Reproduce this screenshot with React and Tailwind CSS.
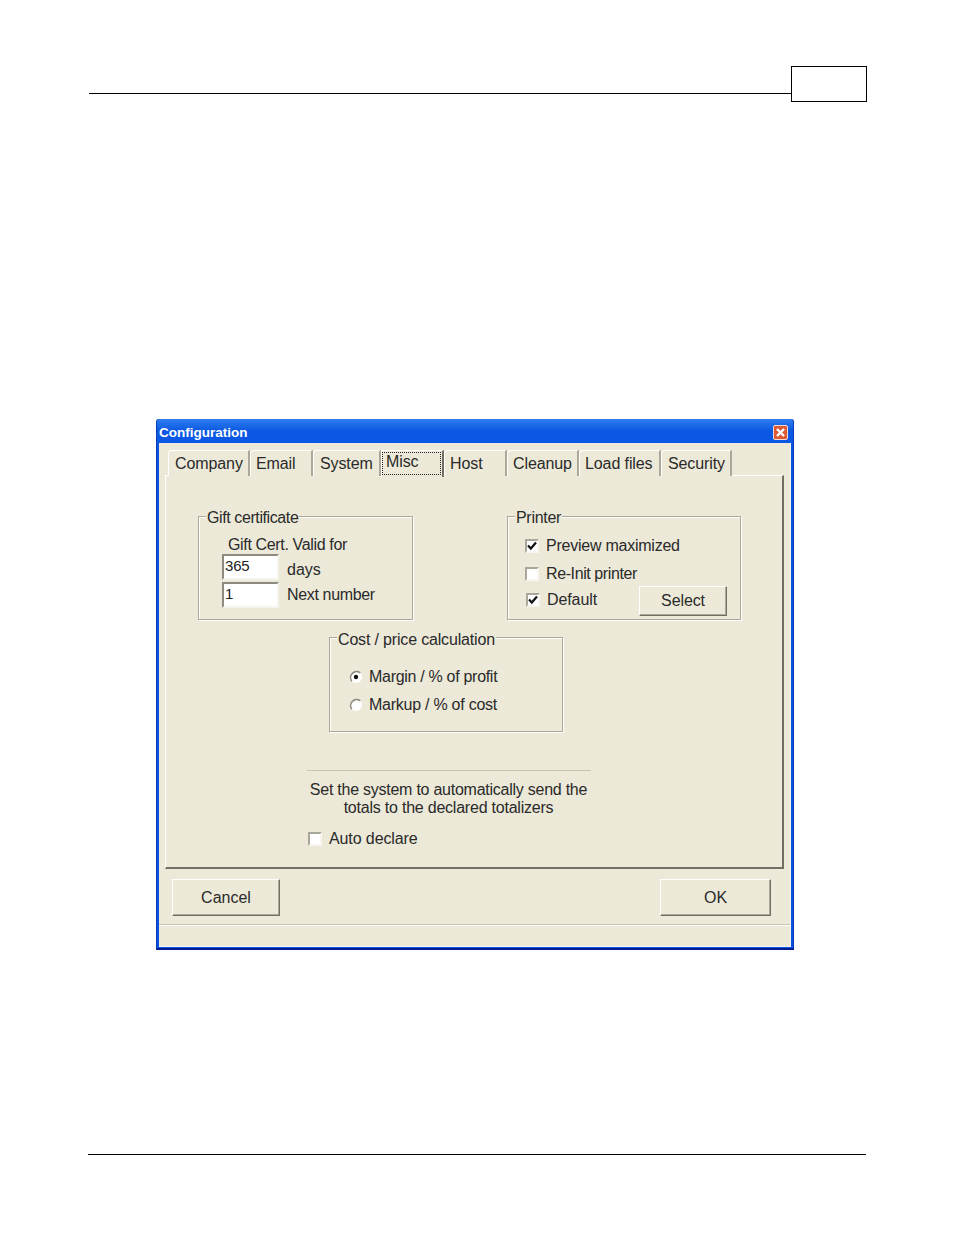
const tabs = [
  { label: 'Company', box: 'w-[82px] pl-[6px]' },
  { label: 'Email', box: 'w-[63px] pl-[5px]' },
  { label: 'System', box: 'w-[68px] pl-[6px]' },
  { label: 'Misc', box: 'w-[63px]', active: true },
  { label: 'Host', box: 'w-[63px] pl-[5px]' },
  { label: 'Cleanup', box: 'w-[72px] pl-[5px]' },
  { label: 'Load files', box: 'w-[82px] pl-[5px]' },
  { label: 'Security', box: 'w-[71px] pl-[6px]' },
];

const bevel = 'border border-t-white border-l-white border-r-[#716f64] border-b-[#716f64] shadow-[inset_-1px_-1px_0_#aca899] bg-[#ece9d8] flex items-center justify-center';

const Tab = ({ label, box, active }) => {
  if (active) {
    return (
      <div className={`${box} h-[27px] relative z-10 -mb-px bg-[#ece9d8] border-t border-l border-t-white border-l-white border-r-2 border-r-[#716f64] pt-[1px] pr-[1px] tracking-[-0.1px]`}>
        <div className="h-[23px] border border-dotted border-[#222] pl-[3px] leading-[18px]">{label}</div>
      </div>
    );
  }
  return (
    <div className={`${box} h-[26px] bg-[#ece9d8] border-t border-l border-t-white border-l-white border-r-2 border-r-[#aca899] leading-[26px] rounded-tl-sm tracking-[-0.1px]`}>
      {label}
    </div>
  );
};

const Group = ({ title, titleClass, className, children }) => (
  <div className={`relative border border-[#aca899] shadow-[1px_1px_0_#fff,inset_1px_1px_0_#fff] ${className}`}>
    <span className={`absolute left-[7px] -top-[9px] bg-[#ece9d8] px-px leading-[20px] ${titleClass}`}>{title}</span>
    {children}
  </div>
);

const Check = ({ checked }) => (
  <span className="w-[14px] h-[14px] shrink-0 bg-white border-2 border-t-[#a9a79a] border-l-[#a9a79a] border-r-[#f7f6f0] border-b-[#f7f6f0] flex items-center justify-center">
    {checked && (
      <svg width="10" height="10" viewBox="0 0 10 10" className="shrink-0">
        <path d="M1 4.5 L3.8 7.5 L9 1.5" fill="none" stroke="#111" strokeWidth="2.2" />
      </svg>
    )}
  </span>
);

const Radio = ({ checked }) => (
  <svg width="14" height="14" viewBox="0 0 14 14" className="shrink-0 -mt-px">
    <circle cx="7" cy="7" r="6" fill="#fff" />
    <path d="M2.8 11.2 A6 6 0 0 1 11.2 2.8" fill="none" stroke="#8d8b80" strokeWidth="1.6" />
    {checked && <circle cx="7" cy="7" r="2.2" fill="#111" />}
  </svg>
);

const Field = ({ value }) => (
  <div className="w-[57px] h-[26px] bg-white border-2 border-t-[#8d8b80] border-l-[#8d8b80] border-r-[#f5f4ee] border-b-[#f5f4ee] pl-px text-[15px] tracking-[-0.2px] leading-[20px] text-[#222]">
    {value}
  </div>
);

export default function App() {
  return (
    <div className="w-[954px] h-[1235px] bg-white flex flex-col overflow-hidden text-[16px] text-[#2a2a2a] font-['Liberation_Sans',Arial,sans-serif]">
      {/* page header */}
      <div className="mt-[66px] ml-[89px] w-[778px] h-[36px] flex items-start">
        <div className="flex-1 h-px bg-black mt-[27px]"></div>
        <div className="w-[76px] h-[36px] border border-black"></div>
      </div>

      {/* dialog */}
      <div className="mt-[317px] ml-[156px] w-[638px] h-[531px] flex flex-col bg-[#0a52e0] border-x border-b-2 border-x-[#0a3cb8] border-b-[#001c90] rounded-t-[3px]">
        <div className="h-[24px] shrink-0 flex items-center justify-between pl-[2px] pr-[5px] pt-[3px] rounded-t-[3px] bg-gradient-to-b from-[#2f7cf0] via-[#0a58e2] to-[#0a58e6]">
          <span className="text-white font-bold text-[13.5px] leading-none">Configuration</span>
          <div className="w-[15px] h-[15px] bg-[#dc5a34] border border-[#f6d8cc] rounded-[2px] flex items-center justify-center">
            <svg width="11" height="11" viewBox="0 0 11 11">
              <path d="M2 2 L9 9 M9 2 L2 9" stroke="#fff" strokeWidth="2.4" />
            </svg>
          </div>
        </div>

        <div className="mx-[2px] mb-px flex-1 bg-[#ece9d8] border-r border-b border-[#f5f4ee] flex flex-col">
          {/* tabs */}
          <div className="h-[33px] shrink-0 ml-[9px] flex items-end relative z-10 -mb-px">
            {tabs.map((tab) => (
              <Tab key={tab.label} {...tab} />
            ))}
          </div>

          {/* Misc page */}
          <div className="ml-[6px] w-[619px] h-[394px] shrink-0 border-t border-l border-t-white border-l-white border-r-2 border-b-2 border-r-[#716f64] border-b-[#716f64] flex flex-col">
            <div className="flex mt-[40px]">
              <Group title="Gift certificate" titleClass="tracking-[-0.4px]" className="ml-[32px] w-[215px] h-[104px] flex flex-col">
                <div className="ml-[29px] mt-[18px] h-[19px] leading-[20px] tracking-[-0.35px]">Gift Cert. Valid for</div>
                <div className="ml-[23px] h-[26px] flex items-center">
                  <Field value="365" />
                  <span className="ml-[8px] mt-[6px]">days</span>
                </div>
                <div className="ml-[23px] mt-[2px] h-[26px] flex items-center">
                  <Field value="1" />
                  <span className="ml-[8px] tracking-[-0.35px]">Next number</span>
                </div>
              </Group>
              <Group title="Printer" titleClass="tracking-[-0.3px]" className="ml-[94px] w-[234px] h-[104px] flex flex-col">
                <div className="ml-[17px] mt-[22px] h-[14px] flex items-center gap-[7px]">
                  <Check checked />
                  <span className="tracking-[-0.24px]">Preview maximized</span>
                </div>
                <div className="ml-[17px] mt-[14px] h-[14px] flex items-center gap-[7px]">
                  <Check />
                  <span className="tracking-[-0.4px]">Re-Init printer</span>
                </div>
                <div className="ml-[18px] mt-[4px] flex items-start">
                  <div className="h-[30px] flex items-center">
                    <Check checked />
                    <span className="ml-[7px] tracking-[-0.1px]">Default</span>
                  </div>
                  <div className={`${bevel} ml-[42px] mt-px w-[88px] h-[30px] tracking-[-0.1px]`}>Select</div>
                </div>
              </Group>
            </div>

            <Group title="Cost / price calculation" titleClass="tracking-[-0.17px] mt-px" className="ml-[163px] mt-[17px] w-[234px] h-[95px] flex flex-col">
              <div className="ml-[19px] mt-[32px] h-[14px] flex items-center gap-[6px]">
                <Radio checked />
                <span className="tracking-[-0.3px]">Margin / % of profit</span>
              </div>
              <div className="ml-[19px] mt-[14px] h-[14px] flex items-center gap-[6px]">
                <Radio />
                <span className="tracking-[-0.25px]">Markup / % of cost</span>
              </div>
            </Group>

            <div className="ml-[141px] mt-[38px] w-[284px] h-px bg-[#c8c5b4]"></div>
            <div className="ml-[141px] mt-[10px] w-[283px] text-center leading-[18px] whitespace-nowrap">
              <div className="tracking-[-0.25px]">Set the system to automatically send the</div>
              <div className="tracking-[-0.22px]">totals to the declared totalizers</div>
            </div>
            <div className="ml-[142px] mt-[15px] h-[14px] flex items-center gap-[7px]">
              <Check />
              <span className="tracking-[-0.1px]">Auto declare</span>
            </div>
          </div>

          {/* buttons */}
          <div className="ml-[13px] mt-[10px] w-[599px] flex justify-between shrink-0">
            <div className={`${bevel} w-[108px] h-[37px]`}>Cancel</div>
            <div className={`${bevel} w-[111px] h-[37px]`}>OK</div>
          </div>
          <div className="mt-[8px] h-[2px] shrink-0 bg-[#c8c5b4] border-b border-white"></div>
        </div>
      </div>

      {/* page footer */}
      <div className="mt-[204px] ml-[88px] w-[778px] h-px bg-black"></div>
    </div>
  );
}
